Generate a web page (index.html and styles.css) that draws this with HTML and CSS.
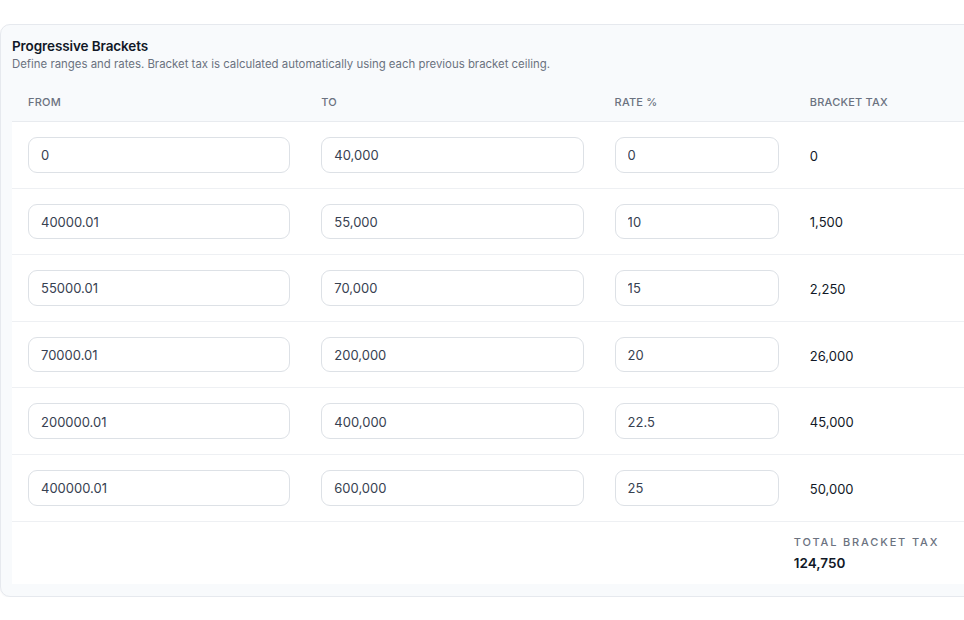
FILE: index.html
```
<!DOCTYPE html>
<html lang="en">
<head>
    <meta charset="UTF-8">
    <meta name="viewport" content="width=device-width, initial-scale=1.0">
    <title>Progressive Brackets</title>
    <link rel="stylesheet" href="styles.css">
</head>
<body>
    <div class="panel">
        <div class="panel-head">
            <h2>Progressive Brackets</h2>
            <p>Define ranges and rates. Bracket tax is calculated automatically using each previous bracket ceiling.</p>
        </div>

        <table class="brackets">
            <colgroup>
                <col class="col-wide">
                <col class="col-wide">
                <col class="col-narrow">
                <col class="col-narrow">
            </colgroup>
            <thead>
                <tr>
                    <th>From</th>
                    <th>To</th>
                    <th>Rate %</th>
                    <th>Bracket Tax</th>
                </tr>
            </thead>
            <tbody>
                <tr>
                    <td><input type="text" value="0"></td>
                    <td><input type="text" value="40,000"></td>
                    <td><input type="text" value="0"></td>
                    <td class="tax">0</td>
                </tr>
                <tr>
                    <td><input type="text" value="40000.01"></td>
                    <td><input type="text" value="55,000"></td>
                    <td><input type="text" value="10"></td>
                    <td class="tax">1,500</td>
                </tr>
                <tr>
                    <td><input type="text" value="55000.01"></td>
                    <td><input type="text" value="70,000"></td>
                    <td><input type="text" value="15"></td>
                    <td class="tax">2,250</td>
                </tr>
                <tr>
                    <td><input type="text" value="70000.01"></td>
                    <td><input type="text" value="200,000"></td>
                    <td><input type="text" value="20"></td>
                    <td class="tax">26,000</td>
                </tr>
                <tr>
                    <td><input type="text" value="200000.01"></td>
                    <td><input type="text" value="400,000"></td>
                    <td><input type="text" value="22.5"></td>
                    <td class="tax">45,000</td>
                </tr>
                <tr>
                    <td><input type="text" value="400000.01"></td>
                    <td><input type="text" value="600,000"></td>
                    <td><input type="text" value="25"></td>
                    <td class="tax">50,000</td>
                </tr>
            </tbody>
            <tfoot>
                <tr>
                    <td colspan="3"></td>
                    <td class="total">
                        <div class="total-label">Total Bracket Tax</div>
                        <div class="total-value">124,750</div>
                    </td>
                </tr>
            </tfoot>
        </table>
    </div>
</body>
</html>
```

FILE: styles.css
```
html, body {
    margin: 0;
    padding: 0;
    overflow: hidden;
}

body {
    font-family: Inter, "Noto Sans", Arial, sans-serif;
    background: #fff;
    padding-top: 24px;
}

.panel {
    width: 1001px;
    box-sizing: border-box;
    background: #f8fafc;
    border: 1px solid #e6e9ee;
    border-radius: 10px;
    box-shadow: 0 1px 2px rgba(15, 23, 42, 0.04);
    padding: 11px 11px 12px;
}

.panel-head h2 {
    margin: 0;
    font-size: 13.5px;
    line-height: 20px;
    font-weight: 600;
    color: #111827;
    letter-spacing: -0.1px;
}

.panel-head p {
    margin: 0;
    font-size: 11.4px;
    line-height: 16px;
    color: #6b7280;
}

.brackets {
    width: 977px;
    margin-top: 10px;
    border-collapse: collapse;
    table-layout: fixed;
}

.col-wide {
    width: 293px;
}

.col-narrow {
    width: 195px;
}

.brackets th {
    text-align: left;
    font-size: 11px;
    line-height: 15px;
    font-weight: 500;
    color: #6b7280;
    text-transform: uppercase;
    letter-spacing: 0.2px;
    padding: 13px 16px 11px;
    border-bottom: 1px solid #e8ebef;
}

.brackets tbody td {
    background: #fff;
    padding: 15px 15px 15px 16px;
    border-bottom: 1px solid #eef0f3;
}

.brackets input {
    display: block;
    width: 100%;
    height: 35.6px;
    box-sizing: border-box;
    border: 1px solid #dde1e6;
    border-radius: 9px;
    background: #fff;
    padding: 1px 12px 0;
    font-family: inherit;
    font-size: 13px;
    color: #374151;
    outline: none;
}

.brackets .tax {
    font-size: 13px;
    font-weight: 400;
    color: #111827;
    padding-top: 16px;
    padding-bottom: 14px;
}

.brackets tfoot td {
    background: #fff;
    padding: 12px 0 12px 0;
}

.brackets .total {
    padding-left: 0;
}

.total-label {
    font-size: 11px;
    line-height: 16px;
    font-weight: 500;
    color: #6b7280;
    text-transform: uppercase;
    letter-spacing: 1.85px;
}

.total-value {
    margin-top: 4px;
    font-size: 13.5px;
    line-height: 18px;
    font-weight: 600;
    color: #111827;
}
```
